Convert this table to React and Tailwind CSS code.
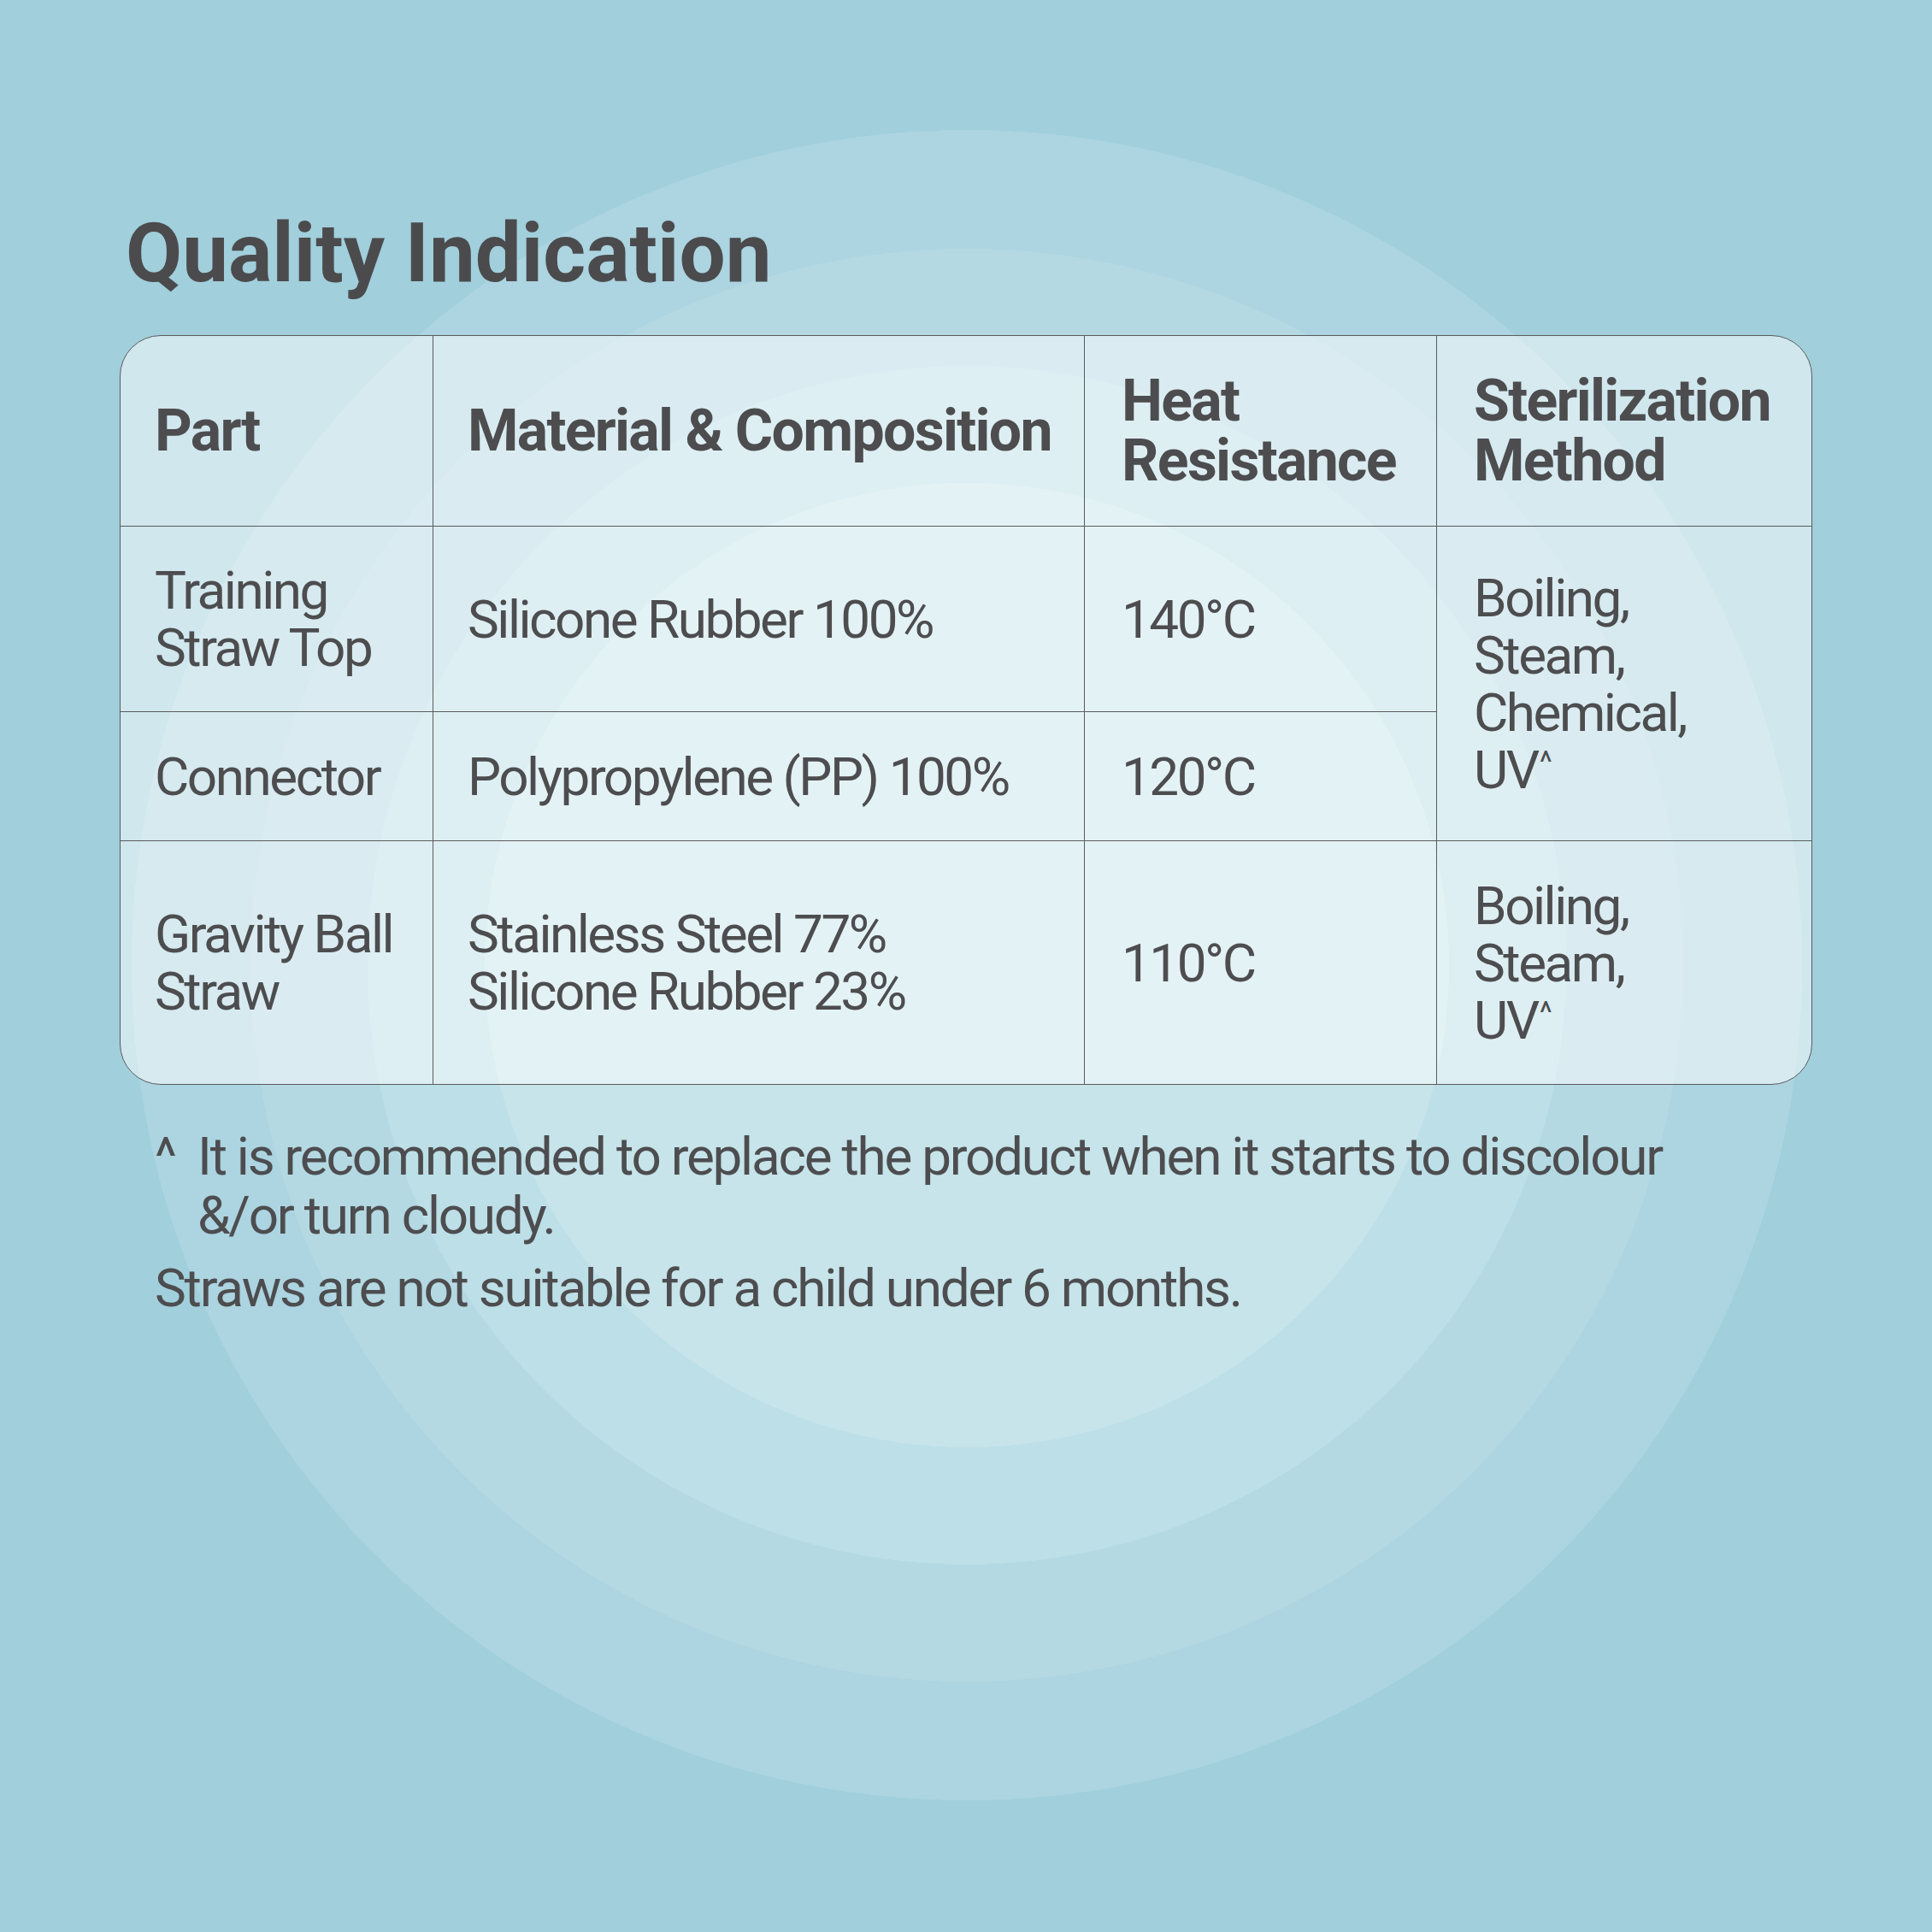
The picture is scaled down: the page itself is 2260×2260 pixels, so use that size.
import React from 'react';

const cellBase = 'flex items-center pl-[40px] pr-4 text-[#4d4d4f]';
const line = 'border-[#5a5b5d]';

const Caret = () => <sup className="text-[36px] ml-[2px]">^</sup>;

const headers = [
  ['Part'],
  ['Material & Composition'],
  ['Heat', 'Resistance'],
  ['Sterilization', 'Method'],
];

const Lines = ({ lines }) => (
  <p className="whitespace-nowrap">
    {lines.map((l, i) => (
      <React.Fragment key={i}>
        {i > 0 && <br />}
        {l}
      </React.Fragment>
    ))}
  </p>
);

export default function App() {
  return (
    <div
      className="w-[2260px] h-[2260px] bg-[radial-gradient(circle_at_1131px_1129px,#c6e4ea_564px,#bddfe7_564px,#bddfe7_701px,#b4d9e3_701px,#b4d9e3_838px,#acd4e1_838px,#acd4e1_977px,#a1cfdc_977px)] pt-[248px] pl-[140px]"
      style={{ fontFamily: 'Roboto, "Noto Sans", sans-serif' }}
    >
      <h1 className="pl-[7px] text-[96px] leading-none font-bold text-[#4b4b4d]">
        Quality Indication
      </h1>

      {/* table */}
      <div className={`mt-[48px] w-[1980px] rounded-[48px] border-[1.5px] ${line} bg-white/50 overflow-hidden`}>
        <div className="grid grid-cols-[366px_762px_412px_1fr] grid-rows-[223px_217px_151px_284px] text-[62px] leading-[67px] tracking-[-0.04em]">
          {headers.map((h, i) => (
            <div
              key={i}
              className={`${cellBase} ${i === 2 || i === 3 ? 'pl-[43px]' : ''} border-b-[1.5px] ${i < 3 ? 'border-r-[1.5px]' : ''} ${line} text-[68px] leading-[70px] font-bold tracking-[-0.025em]`}
            >
              <Lines lines={h} />
            </div>
          ))}

          {/* row 1 */}
          <div className={`${cellBase} border-b-[1.5px] border-r-[1.5px] ${line}`}>
            <Lines lines={['Training', 'Straw Top']} />
          </div>
          <div className={`${cellBase} border-b-[1.5px] border-r-[1.5px] ${line}`}>
            <Lines lines={['Silicone Rubber 100%']} />
          </div>
          <div className={`${cellBase} pl-[43px] border-b-[1.5px] border-r-[1.5px] ${line}`}>
            <Lines lines={['140°C']} />
          </div>
          <div className={`${cellBase} pl-[43px] row-span-2 border-b-[1.5px] ${line}`}>
            <Lines lines={['Boiling,', 'Steam,', 'Chemical,', <>UV<Caret /></>]} />
          </div>

          {/* row 2 */}
          <div className={`${cellBase} border-b-[1.5px] border-r-[1.5px] ${line}`}>
            <Lines lines={['Connector']} />
          </div>
          <div className={`${cellBase} border-b-[1.5px] border-r-[1.5px] ${line}`}>
            <Lines lines={['Polypropylene (PP) 100%']} />
          </div>
          <div className={`${cellBase} pl-[43px] border-b-[1.5px] border-r-[1.5px] ${line}`}>
            <Lines lines={['120°C']} />
          </div>

          {/* row 3 */}
          <div className={`${cellBase} border-r-[1.5px] ${line}`}>
            <Lines lines={['Gravity Ball', 'Straw']} />
          </div>
          <div className={`${cellBase} border-r-[1.5px] ${line}`}>
            <Lines lines={['Stainless Steel 77%', 'Silicone Rubber 23%']} />
          </div>
          <div className={`${cellBase} pl-[43px] border-r-[1.5px] ${line}`}>
            <Lines lines={['110°C']} />
          </div>
          <div className={`${cellBase} pl-[43px]`}>
            <Lines lines={['Boiling,', 'Steam,', <>UV<Caret /></>]} />
          </div>
        </div>
      </div>

      {/* notes */}
      <div className="mt-[49px] pl-[41px] text-[62px] leading-[69px] tracking-[-0.036em] text-[#4d4d4f]">
        <div className="flex">
          <span className="w-[50px] shrink-0">^</span>
          <span>
            It is recommended to replace the product when it starts to discolour
            <br />
            &amp;/or turn cloudy.
          </span>
        </div>
        <p className="mt-[16px]">Straws are not suitable for a child under 6 months.</p>
      </div>
    </div>
  );
}
